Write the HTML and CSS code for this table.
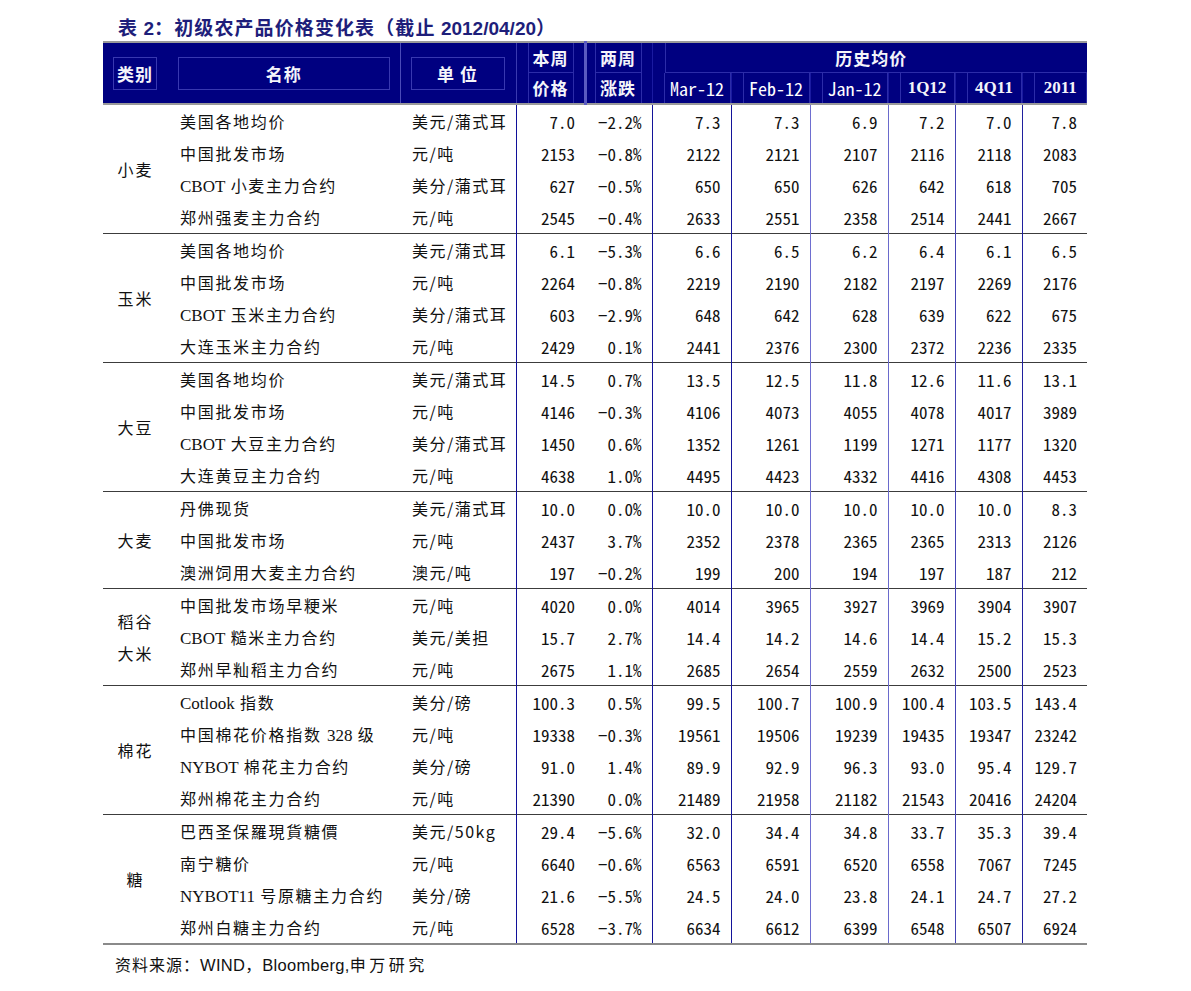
FILE: index.html
```html
<!DOCTYPE html>
<html lang="zh-CN">
<head>
<meta charset="utf-8">
<title>表 2：初级农产品价格变化表</title>
<link rel="stylesheet" href="styles.css">
</head>
<body>
<div class="page">
  <h1 class="title">表 <span class="tnum">2</span>：初级农产品价格变化表（截止 <span class="tnum">2012/04/20</span>）</h1>
  <table class="t">
    <colgroup>
      <col class="w1"><col class="w2"><col class="w3"><col class="w4"><col class="w5">
      <col class="w6"><col class="w7"><col class="w8"><col class="w9"><col class="w10"><col class="w11">
    </colgroup>
    <thead>
      <tr>
        <th rowspan="2" class="hcat"><div class="hbox">类别</div></th>
        <th rowspan="2" class="hname"><div class="hbox">名称</div></th>
        <th rowspan="2" class="hunit"><div class="hbox">单 位</div></th>
        <th class="hsm hwk"><div class="sbox top">本周</div></th>
        <th class="hsm hbw"><div class="sbox top">两周</div></th>
        <th colspan="6" class="hhist"><div class="histbox">历史均价</div></th>
      </tr>
      <tr>
        <th class="hsm hwk"><div class="sbox">价格</div></th>
        <th class="hsm hbw"><div class="sbox">涨跌</div></th>
        <th class="hsub h6"><div class="sbox mono">Mar-12</div></th>
        <th class="hsub"><div class="sbox mono">Feb-12</div></th>
        <th class="hsub"><div class="sbox mono">Jan-12</div></th>
        <th class="hsub"><div class="sbox serif">1Q12</div></th>
        <th class="hsub"><div class="sbox serif">4Q11</div></th>
        <th class="hsub"><div class="sbox serif">2011</div></th>
      </tr>
    </thead>
    <tbody>
      <tr class="g first">
        <td rowspan="4" class="cat">小麦</td>
        <td class="nm">美国各地均价</td><td class="un">美元/蒲式耳</td>
        <td class="n c4">7.0</td><td class="n">−2.2%</td><td class="n c6">7.3</td><td class="n c7">7.3</td><td class="n c8">6.9</td><td class="n c9">7.2</td><td class="n c10">7.0</td><td class="n c11">7.8</td>
      </tr>
      <tr>
        <td class="nm">中国批发市场</td><td class="un">元/吨</td>
        <td class="n c4">2153</td><td class="n">−0.8%</td><td class="n c6">2122</td><td class="n c7">2121</td><td class="n c8">2107</td><td class="n c9">2116</td><td class="n c10">2118</td><td class="n c11">2083</td>
      </tr>
      <tr>
        <td class="nm"><span class="lat">CBOT</span> 小麦主力合约</td><td class="un">美分/蒲式耳</td>
        <td class="n c4">627</td><td class="n">−0.5%</td><td class="n c6">650</td><td class="n c7">650</td><td class="n c8">626</td><td class="n c9">642</td><td class="n c10">618</td><td class="n c11">705</td>
      </tr>
      <tr>
        <td class="nm">郑州强麦主力合约</td><td class="un">元/吨</td>
        <td class="n c4">2545</td><td class="n">−0.4%</td><td class="n c6">2633</td><td class="n c7">2551</td><td class="n c8">2358</td><td class="n c9">2514</td><td class="n c10">2441</td><td class="n c11">2667</td>
      </tr>

      <tr class="g">
        <td rowspan="4" class="cat">玉米</td>
        <td class="nm">美国各地均价</td><td class="un">美元/蒲式耳</td>
        <td class="n c4">6.1</td><td class="n">−5.3%</td><td class="n c6">6.6</td><td class="n c7">6.5</td><td class="n c8">6.2</td><td class="n c9">6.4</td><td class="n c10">6.1</td><td class="n c11">6.5</td>
      </tr>
      <tr>
        <td class="nm">中国批发市场</td><td class="un">元/吨</td>
        <td class="n c4">2264</td><td class="n">−0.8%</td><td class="n c6">2219</td><td class="n c7">2190</td><td class="n c8">2182</td><td class="n c9">2197</td><td class="n c10">2269</td><td class="n c11">2176</td>
      </tr>
      <tr>
        <td class="nm"><span class="lat">CBOT</span> 玉米主力合约</td><td class="un">美分/蒲式耳</td>
        <td class="n c4">603</td><td class="n">−2.9%</td><td class="n c6">648</td><td class="n c7">642</td><td class="n c8">628</td><td class="n c9">639</td><td class="n c10">622</td><td class="n c11">675</td>
      </tr>
      <tr>
        <td class="nm">大连玉米主力合约</td><td class="un">元/吨</td>
        <td class="n c4">2429</td><td class="n">0.1%</td><td class="n c6">2441</td><td class="n c7">2376</td><td class="n c8">2300</td><td class="n c9">2372</td><td class="n c10">2236</td><td class="n c11">2335</td>
      </tr>

      <tr class="g">
        <td rowspan="4" class="cat">大豆</td>
        <td class="nm">美国各地均价</td><td class="un">美元/蒲式耳</td>
        <td class="n c4">14.5</td><td class="n">0.7%</td><td class="n c6">13.5</td><td class="n c7">12.5</td><td class="n c8">11.8</td><td class="n c9">12.6</td><td class="n c10">11.6</td><td class="n c11">13.1</td>
      </tr>
      <tr>
        <td class="nm">中国批发市场</td><td class="un">元/吨</td>
        <td class="n c4">4146</td><td class="n">−0.3%</td><td class="n c6">4106</td><td class="n c7">4073</td><td class="n c8">4055</td><td class="n c9">4078</td><td class="n c10">4017</td><td class="n c11">3989</td>
      </tr>
      <tr>
        <td class="nm"><span class="lat">CBOT</span> 大豆主力合约</td><td class="un">美分/蒲式耳</td>
        <td class="n c4">1450</td><td class="n">0.6%</td><td class="n c6">1352</td><td class="n c7">1261</td><td class="n c8">1199</td><td class="n c9">1271</td><td class="n c10">1177</td><td class="n c11">1320</td>
      </tr>
      <tr>
        <td class="nm">大连黄豆主力合约</td><td class="un">元/吨</td>
        <td class="n c4">4638</td><td class="n">1.0%</td><td class="n c6">4495</td><td class="n c7">4423</td><td class="n c8">4332</td><td class="n c9">4416</td><td class="n c10">4308</td><td class="n c11">4453</td>
      </tr>

      <tr class="g">
        <td rowspan="3" class="cat">大麦</td>
        <td class="nm">丹佛现货</td><td class="un">美元/蒲式耳</td>
        <td class="n c4">10.0</td><td class="n">0.0%</td><td class="n c6">10.0</td><td class="n c7">10.0</td><td class="n c8">10.0</td><td class="n c9">10.0</td><td class="n c10">10.0</td><td class="n c11">8.3</td>
      </tr>
      <tr>
        <td class="nm">中国批发市场</td><td class="un">元/吨</td>
        <td class="n c4">2437</td><td class="n">3.7%</td><td class="n c6">2352</td><td class="n c7">2378</td><td class="n c8">2365</td><td class="n c9">2365</td><td class="n c10">2313</td><td class="n c11">2126</td>
      </tr>
      <tr>
        <td class="nm">澳洲饲用大麦主力合约</td><td class="un">澳元/吨</td>
        <td class="n c4">197</td><td class="n">−0.2%</td><td class="n c6">199</td><td class="n c7">200</td><td class="n c8">194</td><td class="n c9">197</td><td class="n c10">187</td><td class="n c11">212</td>
      </tr>

      <tr class="g">
        <td rowspan="3" class="cat">稻谷<br>大米</td>
        <td class="nm">中国批发市场早粳米</td><td class="un">元/吨</td>
        <td class="n c4">4020</td><td class="n">0.0%</td><td class="n c6">4014</td><td class="n c7">3965</td><td class="n c8">3927</td><td class="n c9">3969</td><td class="n c10">3904</td><td class="n c11">3907</td>
      </tr>
      <tr>
        <td class="nm"><span class="lat">CBOT</span> 糙米主力合约</td><td class="un">美元/美担</td>
        <td class="n c4">15.7</td><td class="n">2.7%</td><td class="n c6">14.4</td><td class="n c7">14.2</td><td class="n c8">14.6</td><td class="n c9">14.4</td><td class="n c10">15.2</td><td class="n c11">15.3</td>
      </tr>
      <tr>
        <td class="nm">郑州早籼稻主力合约</td><td class="un">元/吨</td>
        <td class="n c4">2675</td><td class="n">1.1%</td><td class="n c6">2685</td><td class="n c7">2654</td><td class="n c8">2559</td><td class="n c9">2632</td><td class="n c10">2500</td><td class="n c11">2523</td>
      </tr>

      <tr class="g">
        <td rowspan="4" class="cat">棉花</td>
        <td class="nm"><span class="lat">Cotlook</span> 指数</td><td class="un">美分/磅</td>
        <td class="n c4">100.3</td><td class="n">0.5%</td><td class="n c6">99.5</td><td class="n c7">100.7</td><td class="n c8">100.9</td><td class="n c9">100.4</td><td class="n c10">103.5</td><td class="n c11">143.4</td>
      </tr>
      <tr>
        <td class="nm">中国棉花价格指数 <span class="lat">328</span> 级</td><td class="un">元/吨</td>
        <td class="n c4">19338</td><td class="n">−0.3%</td><td class="n c6">19561</td><td class="n c7">19506</td><td class="n c8">19239</td><td class="n c9">19435</td><td class="n c10">19347</td><td class="n c11">23242</td>
      </tr>
      <tr>
        <td class="nm"><span class="lat">NYBOT</span> 棉花主力合约</td><td class="un">美分/磅</td>
        <td class="n c4">91.0</td><td class="n">1.4%</td><td class="n c6">89.9</td><td class="n c7">92.9</td><td class="n c8">96.3</td><td class="n c9">93.0</td><td class="n c10">95.4</td><td class="n c11">129.7</td>
      </tr>
      <tr>
        <td class="nm">郑州棉花主力合约</td><td class="un">元/吨</td>
        <td class="n c4">21390</td><td class="n">0.0%</td><td class="n c6">21489</td><td class="n c7">21958</td><td class="n c8">21182</td><td class="n c9">21543</td><td class="n c10">20416</td><td class="n c11">24204</td>
      </tr>

      <tr class="g">
        <td rowspan="4" class="cat lastcat">糖</td>
        <td class="nm">巴西圣保羅現貨糖價</td><td class="un">美元/50kg</td>
        <td class="n c4">29.4</td><td class="n">−5.6%</td><td class="n c6">32.0</td><td class="n c7">34.4</td><td class="n c8">34.8</td><td class="n c9">33.7</td><td class="n c10">35.3</td><td class="n c11">39.4</td>
      </tr>
      <tr>
        <td class="nm">南宁糖价</td><td class="un">元/吨</td>
        <td class="n c4">6640</td><td class="n">−0.6%</td><td class="n c6">6563</td><td class="n c7">6591</td><td class="n c8">6520</td><td class="n c9">6558</td><td class="n c10">7067</td><td class="n c11">7245</td>
      </tr>
      <tr>
        <td class="nm"><span class="lat">NYBOT11</span> 号原糖主力合约</td><td class="un">美分/磅</td>
        <td class="n c4">21.6</td><td class="n">−5.5%</td><td class="n c6">24.5</td><td class="n c7">24.0</td><td class="n c8">23.8</td><td class="n c9">24.1</td><td class="n c10">24.7</td><td class="n c11">27.2</td>
      </tr>
      <tr class="last">
        <td class="nm">郑州白糖主力合约</td><td class="un">元/吨</td>
        <td class="n c4">6528</td><td class="n">−3.7%</td><td class="n c6">6634</td><td class="n c7">6612</td><td class="n c8">6399</td><td class="n c9">6548</td><td class="n c10">6507</td><td class="n c11">6924</td>
      </tr>
    </tbody>
  </table>
  <p class="src">资料来源：<span class="sans">WIND</span>，<span class="sans">Bloomberg,</span><span class="wide">申万研究</span></p>
</div>
</body>
</html>
```

FILE: styles.css
```css
html, body {
  margin: 0;
  padding: 0;
  background: #ffffff;
}

.page {
  padding: 14px 0 0 103px;
  font-family: "Noto Sans CJK SC", "Noto Sans", sans-serif;
  color: #111;
}

.title {
  margin: 0 0 0 15px;
  height: 27px;
  font-size: 19px;
  line-height: 26px;
  font-weight: bold;
  color: #1e1e7a;
  letter-spacing: 1.1px;
  white-space: nowrap;
}

.tnum {
  font-family: "Liberation Sans", sans-serif;
  letter-spacing: 0;
}

.t {
  border-collapse: collapse;
  table-layout: fixed;
  width: 984px;
}

.w1 { width: 65px; }
.w2 { width: 232px; }
.w3 { width: 116px; }
.w4 { width: 69px; }
.w5 { width: 67px; }
.w6 { width: 79px; }
.w7 { width: 79px; }
.w8 { width: 78px; }
.w9 { width: 67px; }
.w10 { width: 67px; }
.w11 { width: 65px; }

/* ---------- header ---------- */
thead th {
  background: #000080;
  color: #f4f4fa;
  padding: 0;
  height: 30px;
  font-weight: bold;
  font-size: 17px;
  letter-spacing: 1px;
  vertical-align: middle;
}

thead tr:first-child th {
  border-top: 2px solid #9a9a9a;
}

thead tr:last-child th,
thead th[rowspan] {
  border-bottom: 2px solid #9a9a9a;
}

.hbox {
  margin: 0 10px;
  height: 31px;
  line-height: 31px;
  border: 1px solid #3838b0;
  text-align: center;
}

.hcat .hbox { margin: 0 11px 0 10px; }
.hname .hbox { margin: 0 10px; }
.hunit { border-left: 1px solid #4a4ab8; }
.hunit .hbox { margin: 0 11px 0 10px; }

.hsm .sbox {
  height: 30px;
  line-height: 30px;
  margin: 0 10px 0 11px;
  border-left: 1px solid #2c2ca8;
  border-right: 1px solid #2c2ca8;
  text-align: center;
}

.hsm .sbox.top {
  border-bottom: 1px solid #2c2ca8;
  height: 29px;
  line-height: 30px;
}

.hwk { border-left: 1px solid #3a3ab0; }
.hbw { border-left: 3px solid #5a5ac0; }
.hbw .sbox { margin: 0 10px 0 8px; }

.hhist { border-left: 1px solid #1a1aa0; }
.histbox {
  margin-left: 12px;
  height: 29px;
  line-height: 30px;
  border-left: 1px solid #2c2ca8;
  border-bottom: 1px solid #2c2ca8;
  text-align: center;
  padding-right: 10px;
}

.hsub .sbox {
  height: 30px;
  line-height: 30px;
  margin: 0 0 0 11px;
  border-left: 1px solid #2c2ca8;
  border-right: 1px solid #2c2ca8;
  text-align: center;
}

.hsub { border-left: 1px solid #1a1aa0; }

.mono {
  font-family: "Noto Sans CJK JP", sans-serif;
  font-feature-settings: "hwid" 1;
  font-weight: normal;
  font-size: 18px;
  letter-spacing: 0;
  color: #ffffff;
}

.serif {
  font-family: "Liberation Serif", serif;
  font-weight: bold;
  font-size: 17px;
  letter-spacing: 0;
}

/* ---------- body ---------- */
tbody td {
  height: 32px;
  padding: 0;
  font-size: 16px;
  white-space: nowrap;
  vertical-align: middle;
}

tbody tr.g td {
  border-top: 1px solid #3c3c3c;
}

tbody tr.g.first td {
  border-top: none;
}

tbody tr.last td,
tbody td.cat.lastcat {
  border-bottom: 2px solid #8a8a8a;
}

.cat {
  text-align: center;
  letter-spacing: 2px;
  line-height: 32px;
}

.nm {
  padding-left: 12px !important;
  letter-spacing: 1.7px;
}

.un {
  padding-left: 12px !important;
  letter-spacing: 1.5px;
}

.lat {
  font-family: "Liberation Serif", serif;
  font-size: 17px;
  letter-spacing: 0;
}

.n {
  text-align: right;
  padding-right: 10px !important;
  font-family: "Noto Sans CJK JP", sans-serif;
  font-feature-settings: "hwid" 1;
  font-size: 17px;
}

.c4 { border-left: 1px solid #10109a; }
.c6 { border-left: 1px solid #14149a; }
.c7 { border-left: 1px solid #14149a; }
.c8 { border-left: 1px solid #6e6ed0; }
.c9 { border-left: 1px solid #6a6acc; }
.c10 { border-left: 1px solid #4444b4; }
.c11 { border-left: 1px solid #20209e; }

/* ---------- footer ---------- */
.src {
  margin: 7px 0 0 12px;
  font-size: 16px;
  letter-spacing: 1px;
  color: #111;
}

.sans {
  font-family: "Liberation Sans", sans-serif;
  font-size: 16.5px;
  letter-spacing: 0.3px;
}

.wide {
  letter-spacing: 3.5px;
}
```
